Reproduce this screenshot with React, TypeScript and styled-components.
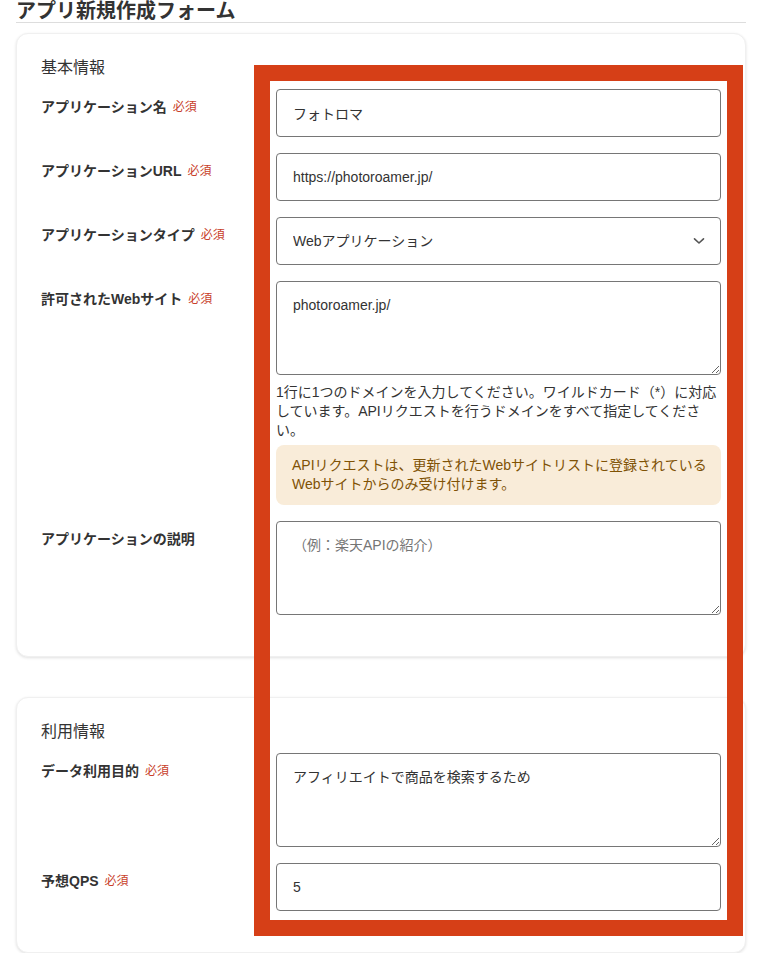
import React from "react";
import styled, { createGlobalStyle } from "styled-components";

const GlobalStyle = createGlobalStyle`
  html, body {
    margin: 0;
    padding: 0;
    background: #ffffff;
  }
  body {
    font-family: "Liberation Sans", "Noto Sans CJK JP", sans-serif;
    color: #333333;
  }
  * { box-sizing: border-box; }
`;

const Page = styled.div`
  position: relative;
  width: 765px;
  padding: 0 19px 0 16px;
`;

const Title = styled.h1`
  margin: 0;
  font-size: 20px;
  font-weight: 700;
  line-height: 22px;
  color: #333333;
  border-bottom: 1px solid #dddddd;
`;

const Card = styled.section<{ $top: number }>`
  margin-top: ${(p) => p.$top}px;
  background: #ffffff;
  border: 1px solid #f0f0f0;
  border-radius: 12px;
  box-shadow: 0 1px 3px rgba(0, 0, 0, 0.12);
  padding: 23px 24px 41px;
`;

const SectionTitle = styled.h2`
  margin: 0 0 10px;
  font-size: 16px;
  font-weight: 400;
  line-height: 22px;
  color: #333333;
`;

const FormGrid = styled.div`
  display: grid;
  grid-template-columns: 1fr 445px;
  column-gap: 16px;
  row-gap: 16px;
`;

const Label = styled.label`
  display: flex;
  align-items: center;
  gap: 6px;
  padding-top: 8px;
  height: 28px;
  font-size: 14px;
  font-weight: 700;
  line-height: 20px;
  color: #333333;
`;

const Required = styled.span`
  font-size: 12px;
  font-weight: 400;
  color: #c8402a;
`;

const Field = styled.div`
  display: flex;
  flex-direction: column;
  min-width: 0;
`;

const TextInput = styled.input`
  width: 100%;
  height: 48px;
  padding: 0 16px;
  border: 1px solid #767676;
  border-radius: 4px;
  font-family: inherit;
  font-size: 14px;
  color: #333333;
  background: #ffffff;
  outline: none;
`;

const TextArea = styled.textarea`
  display: block;
  width: 100%;
  height: 94px;
  padding: 13px 16px;
  border: 1px solid #767676;
  border-radius: 4px;
  font-family: inherit;
  font-size: 14px;
  line-height: 20px;
  color: #333333;
  background: #ffffff;
  outline: none;
  &::placeholder {
    color: #757575;
  }
`;

const SelectWrap = styled.div`
  position: relative;
  width: 100%;
`;

const Select = styled.select`
  width: 100%;
  height: 48px;
  padding: 0 40px 0 16px;
  border: 1px solid #767676;
  border-radius: 4px;
  font-family: inherit;
  font-size: 14px;
  color: #333333;
  background: #ffffff;
  appearance: none;
  -webkit-appearance: none;
  outline: none;
`;

const Chevron = styled.svg`
  position: absolute;
  right: 16px;
  top: 50%;
  margin-top: -4px;
  width: 12px;
  height: 8px;
  pointer-events: none;
`;

const HelpText = styled.p`
  margin: 8px 0 0;
  font-size: 14px;
  line-height: 19px;
  color: #333333;
`;

const Notice = styled.div`
  margin-top: 5px;
  padding: 11px 10px 11px 16px;
  border-radius: 8px;
  background: #f9ecd9;
  color: #7f5205;
  font-size: 14px;
  line-height: 19px;
`;

const Highlight = styled.div`
  position: absolute;
  left: 254px;
  top: 65px;
  width: 489px;
  height: 871px;
  border: 16px solid #d63f17;
  pointer-events: none;
`;

type RowProps = { label: string; required?: boolean; children: React.ReactNode };

const Row = ({ label, required, children }: RowProps) => (
  <>
    <Label>
      {label}
      {required && <Required>必須</Required>}
    </Label>
    <Field>{children}</Field>
  </>
);

export default function App() {
  return (
    <>
      <GlobalStyle />
      <Page>
        <Title>アプリ新規作成フォーム</Title>
        <Card $top={10}>
          <SectionTitle>基本情報</SectionTitle>
          <FormGrid>
            <Row label="アプリケーション名" required>
              <TextInput defaultValue="フォトロマ" />
            </Row>
            <Row label="アプリケーションURL" required>
              <TextInput defaultValue="https://photoroamer.jp/" />
            </Row>
            <Row label="アプリケーションタイプ" required>
              <SelectWrap>
                <Select defaultValue="web">
                  <option value="web">Webアプリケーション</option>
                </Select>
                <Chevron viewBox="0 0 12 8" fill="none">
                  <path d="M1.5 1.8 L6 6 L10.5 1.8" stroke="#555" strokeWidth="1.6" strokeLinecap="round" strokeLinejoin="round" />
                </Chevron>
              </SelectWrap>
            </Row>
            <Row label="許可されたWebサイト" required>
              <TextArea defaultValue="photoroamer.jp/" />
              <HelpText>
                1行に1つのドメインを入力してください。ワイルドカード（*）に対応しています。APIリクエストを行うドメインをすべて指定してください。
              </HelpText>
              <Notice>
                APIリクエストは、更新されたWebサイトリストに登録されているWebサイトからのみ受け付けます。
              </Notice>
            </Row>
            <Row label="アプリケーションの説明">
              <TextArea placeholder="（例：楽天APIの紹介）" />
            </Row>
          </FormGrid>
        </Card>
        <Card $top={40}>
          <SectionTitle>利用情報</SectionTitle>
          <FormGrid>
            <Row label="データ利用目的" required>
              <TextArea defaultValue="アフィリエイトで商品を検索するため" />
            </Row>
            <Row label="予想QPS" required>
              <TextInput defaultValue="5" />
            </Row>
          </FormGrid>
        </Card>
        <Highlight />
      </Page>
    </>
  );
}
